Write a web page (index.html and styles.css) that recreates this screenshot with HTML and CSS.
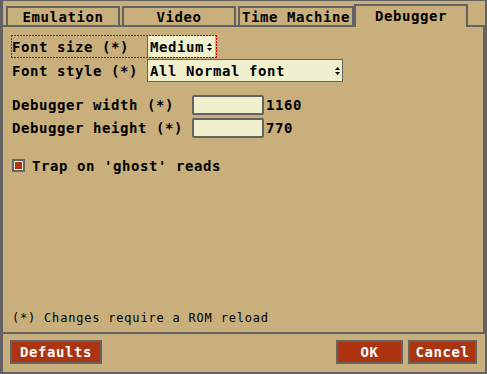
FILE: index.html
```html
<!DOCTYPE html>
<html lang="en">
<head>
    <meta charset="UTF-8">
    <title>Debugger settings</title>
    <link rel="stylesheet" href="styles.css">
</head>
<body>
    <div class="dialog">
        <!-- Tabs -->
        <div class="tabs">
            <div class="tab">Emulation</div>
            <div class="tab">Video</div>
            <div class="tab tab-wide">Time Machine</div>
            <div class="tab active">Debugger</div>
        </div>

        <!-- Tab panel -->
        <div class="panel">
            <div class="row focus">
                <span class="label">Font size (*)</span>
                <div class="popup popup-size">
                    <span>Medium</span>
                    <svg class="arrows" width="5" height="8" viewBox="0 0 5 8"><path d="M0 3H5L2.5 0Z M0 5H5L2.5 8Z" fill="#000"/></svg>
                </div>
            </div>
            <div class="row row-style">
                <span class="label">Font style (*)</span>
                <div class="popup popup-style">
                    <span>All Normal font</span>
                    <svg class="arrows" width="5" height="8" viewBox="0 0 5 8"><path d="M0 3H5L2.5 0Z M0 5H5L2.5 8Z" fill="#000"/></svg>
                </div>
            </div>
            <div class="row row-field first-field">
                <span class="label label-field">Debugger width (*)</span>
                <div class="field"></div>
                <span class="value">1160</span>
            </div>
            <div class="row row-field">
                <span class="label label-field">Debugger height (*)</span>
                <div class="field"></div>
                <span class="value">770</span>
            </div>
            <div class="row row-check">
                <span class="checkbox"><span class="check-fill"></span></span>
                <span class="check-label">Trap on 'ghost' reads</span>
            </div>
            <p class="note">(*) Changes require a ROM reload</p>
        </div>

        <!-- Buttons -->
        <div class="footer">
            <button class="btn btn-defaults">Defaults</button>
            <button class="btn btn-ok">OK</button>
            <button class="btn btn-cancel">Cancel</button>
        </div>
    </div>
</body>
</html>
```

FILE: styles.css
```css
body {
    margin: 0;
    background: #c9af7c;
}
.dialog {
    width: 487px;
    height: 374px;
    box-sizing: border-box;
    border-style: solid;
    border-color: #636363;
    border-width: 1px 2px 2px 3px;
    background: #c9af7c;
    display: flex;
    flex-direction: column;
    font-family: "DejaVu Sans Mono", monospace;
    font-weight: bold;
    font-size: 14px;
    letter-spacing: 0.57px;
    color: #000;
}
.tabs {
    display: flex;
    align-items: flex-end;
    height: 24px;
    flex: none;
    padding-left: 3px;
    border-bottom: 2px solid #636363;
}
.tab {
    box-sizing: border-box;
    width: 114px;
    height: 19px;
    margin-right: 2px;
    padding-top: 1px;
    border: 2px solid #636363;
    border-bottom: 0;
    text-align: center;
    line-height: 16px;
    white-space: nowrap;
}
.tab-wide {
    width: 116px;
    margin-right: 0;
}
.tab.active {
    height: 23px;
    margin-bottom: -2px;
    padding-top: 2px;
    background: #c9af7c;
}
.panel {
    flex: 1;
    display: flex;
    flex-direction: column;
    padding: 8px 0 7px 8px;
    border-right: 2px solid #636363;
    border-bottom: 2px solid #636363;
}
.row {
    display: flex;
    align-items: center;
    line-height: 16px;
}
.label {
    width: 135px;
    flex: none;
    white-space: nowrap;
}
/* dotted focus frame, 2px on / 1px off */
.focus {
    box-sizing: border-box;
    width: 206px;
    height: 23px;
    padding: 1px;
    background-image:
        linear-gradient(90deg, #e00000 2px, transparent 2px),
        linear-gradient(90deg, #e00000 2px, transparent 2px),
        linear-gradient(180deg, #e00000 2px, transparent 2px),
        linear-gradient(180deg, #e00000 2px, transparent 2px);
    background-size: 3px 1px, 3px 1px, 1px 3px, 1px 3px;
    background-position: 0 0, 0 100%, 0 0, 100% 0;
    background-repeat: repeat-x, repeat-x, repeat-y, repeat-y;
}
.popup {
    box-sizing: border-box;
    display: flex;
    align-items: center;
    justify-content: space-between;
    padding: 0 3px 0 2px;
    background: #f0f0cf;
    white-space: nowrap;
}
.popup-size {
    width: 68px;
    height: 21px;
    border-left: 1px solid #636363;
}
.row-style {
    margin-top: 1px;
    height: 23px;
    padding-left: 1px;
}
.popup-style {
    width: 196px;
    height: 23px;
    border: 1px solid #636363;
    padding-right: 2px;
}
.arrows {
    flex: none;
}
.row-field {
    margin-top: 3px;
    height: 20px;
    padding-left: 1px;
}
.first-field {
    margin-top: 13px;
}
.label-field {
    width: 180px;
}
.field {
    box-sizing: border-box;
    width: 72px;
    height: 20px;
    border: 2px solid #636363;
    border-radius: 2px;
    background: #f0f0cf;
}
.value {
    margin-left: 2px;
}
.row-check {
    margin-top: 21px;
    height: 13px;
    padding-left: 1px;
}
.checkbox {
    box-sizing: border-box;
    width: 13px;
    height: 13px;
    padding: 1px;
    border: 2px solid #636363;
    background: #f0f0cf;
    flex: none;
}
.check-fill {
    display: block;
    width: 7px;
    height: 7px;
    background: #ac3410;
}
.check-label {
    margin-left: 7px;
    white-space: nowrap;
}
.note {
    margin: auto 0 0 0;
    padding-left: 1px;
    font-size: 12px;
    font-weight: normal;
    letter-spacing: 0.8px;
    line-height: 14px;
}
.footer {
    flex: none;
    height: 38px;
    box-sizing: border-box;
    display: flex;
    align-items: flex-start;
    padding: 6px 8px 0 7px;
}
.btn {
    box-sizing: border-box;
    height: 24px;
    padding: 0;
    border: 2px solid #636363;
    background: #ac3410;
    color: #fff;
    font: inherit;
    letter-spacing: inherit;
    line-height: 20px;
}
.btn-defaults {
    width: 92px;
}
.btn-ok {
    width: 67px;
    margin-left: auto;
}
.btn-cancel {
    width: 69px;
    margin-left: 5px;
}
```
